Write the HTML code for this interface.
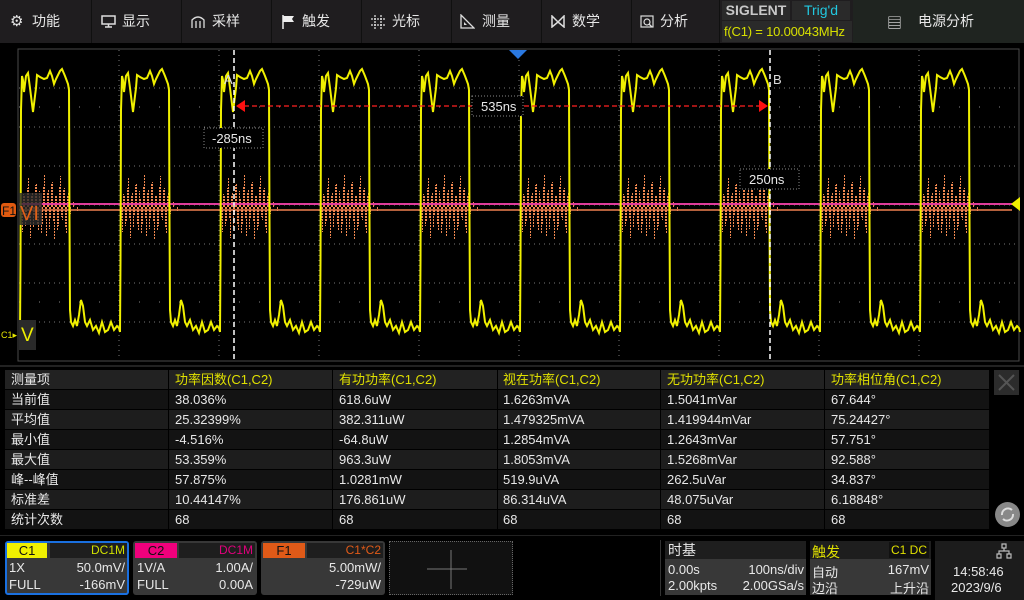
<!DOCTYPE html>
<html><head><meta charset="utf-8"><style>
*{margin:0;padding:0;box-sizing:border-box}
body{width:1024px;height:600px;background:#000;overflow:hidden;position:relative;font-family:"Liberation Sans","Noto Sans CJK SC",sans-serif;color:#e8e8e8;font-size:13px}
.abs{position:absolute}
.menu{left:0;top:0;width:1024px;height:43px;background:#1f1d1f}
.mb{position:absolute;top:0;height:43px;border-right:1px solid #101010;font-size:14px;line-height:43px;color:#e6e6e6}
.tbl{left:5px;top:370px;width:984px}
.row{position:absolute;left:0;width:984px;height:19px}
.cell{position:absolute;top:0;height:19px;line-height:19px;padding-left:6px;font-size:13px;white-space:nowrap}
.box{position:absolute;top:541px;height:54px;background:#383838;border-radius:3px}
</style></head><body>
<div class="abs menu">
 <div class="mb" style="left:0;width:92px"><span style="position:absolute;left:10px;font-size:15px">⚙</span><span style="position:absolute;left:32px">功能</span></div>
 <div class="mb" style="left:92px;width:90px"><svg style="position:absolute;left:9px;top:15px" width="15" height="13"><rect x="1" y="1" width="13" height="8" fill="none" stroke="#ddd" stroke-width="1.5"/><path d="M7.5 9v3M4 12h7" stroke="#ddd" stroke-width="1.5"/></svg><span style="position:absolute;left:30px">显示</span></div>
 <div class="mb" style="left:182px;width:90px"><svg style="position:absolute;left:9px;top:15px" width="14" height="13"><path d="M1 13V5Q7-1 13 5V13M5 13V6M9 13V6" fill="none" stroke="#ddd" stroke-width="1.3"/></svg><span style="position:absolute;left:30px">采样</span></div>
 <div class="mb" style="left:272px;width:90px"><svg style="position:absolute;left:9px;top:14px" width="14" height="15"><path d="M2 1v14" stroke="#eee" stroke-width="1.5"/><path d="M2 2h11l-2 3 2 3H2z" fill="#eee"/></svg><span style="position:absolute;left:30px">触发</span></div>
 <div class="mb" style="left:362px;width:90px"><svg style="position:absolute;left:9px;top:15px" width="14" height="14"><path d="M4 0v14M10 0v14M0 4h14M0 10h14" stroke="#ddd" stroke-dasharray="2 1" stroke-width="1.3"/></svg><span style="position:absolute;left:30px">光标</span></div>
 <div class="mb" style="left:452px;width:90px"><svg style="position:absolute;left:8px;top:14px" width="15" height="15"><path d="M1 1v13h13z" fill="none" stroke="#ddd" stroke-width="1.3"/><path d="M4 8v3h3z" fill="#ddd"/></svg><span style="position:absolute;left:30px">测量</span></div>
 <div class="mb" style="left:542px;width:90px"><svg style="position:absolute;left:9px;top:15px" width="15" height="13"><path d="M1 1l6 6 6-6v11l-6-5-6 5z" fill="none" stroke="#ddd" stroke-width="1.5"/></svg><span style="position:absolute;left:30px">数学</span></div>
 <div class="mb" style="left:632px;width:88px"><svg style="position:absolute;left:8px;top:14px" width="15" height="15"><rect x="1" y="2" width="12" height="11" fill="none" stroke="#ddd" stroke-width="1.2"/><circle cx="7" cy="8" r="3" fill="none" stroke="#ddd" stroke-width="1.2"/><path d="M9 10l3 3" stroke="#ddd" stroke-width="1.3"/></svg><span style="position:absolute;left:28px">分析</span></div>
 <div class="abs" style="left:722px;top:1px;width:68px;height:19px;background:#2a2a2a;color:#c8c8c8;font-weight:bold;font-size:14px;line-height:19px;text-align:center;white-space:nowrap">SIGLENT</div>
 <div class="abs" style="left:792px;top:1px;width:58px;height:19px;background:#2a2a2a;color:#22c8e0;font-size:14px;line-height:19px;text-align:center">Trig'd</div>
 <div class="abs" style="left:722px;top:21px;width:130px;height:21px;background:#2a2a2a;color:#d8e000;font-size:13px;line-height:21px;padding-left:2px;white-space:nowrap;letter-spacing:-0.2px">f(C1) = 10.00043MHz</div>
 <div class="abs" style="left:853px;top:0;width:171px;height:43px;background:#1f2420"><span style="position:absolute;left:34px;top:12px;font-size:15px">▤</span><span style="position:absolute;left:65px;top:0;line-height:43px;font-size:14px">电源分析</span></div>
</div>

<svg class="abs" style="left:0;top:43px" width="1024" height="325" viewBox="0 43 1024 325">
 <defs>
  <path id="wf" d="M0,332 L0.5,260 L1,110 L2,76 L3,80 L4,92 L5,84 L6,76 L8,73 L10,88 L12,104 L13,112 L14,104 L16,88 L17,75 L20,77 L24,79 L27,78 L30,71 L32,76 L34,84 L36,79 L40,71 L42,69 L45,76 L48,84 L49,90 L49.5,220 L50,310 L51,322 L53,326 L55,320 L57,326 L59,315 L61,300 L63,306 L65,322 L67,326 L70,320 L73,330 L76,326 L79,333 L82,322 L85,332 L88,330 L91,322 L94,330 L97,326 L99,328 L100,332" fill="none" stroke="#f0f000" stroke-width="2"/>
  <path id="ns" d="M0.5,207V186M1.5,207V220M2.5,207V232M3.5,207V194M4.5,207V196M5.5,207V226M6.5,207V222M7.5,207V188M8.5,207V178M9.5,207V218M10.5,207V238M11.5,207V196M12.5,207V192M13.5,207V228M14.5,207V216M15.5,207V185M16.5,207V184M17.5,207V224M18.5,207V230M19.5,207V191M20.5,207V199M21.5,207V234M22.5,207V224M23.5,207V187M24.5,207V174M25.5,207V219M26.5,207V236M27.5,207V193M28.5,207V190M29.5,207V229M30.5,207V218M31.5,207V183M32.5,207V182M33.5,207V221M34.5,207V240M35.5,207V196M36.5,207V195M37.5,207V231M38.5,207V226M39.5,207V186M40.5,207V176M41.5,207V217M42.5,207V220M43.5,207V190M44.5,207V188M45.5,207V227M46.5,207V234M47.5,207V195M48.5,207V192M49.5,207V220M50.5,207V214M53.5,207V202M57.5,207V211" stroke="#f08850" stroke-width="1" stroke-dasharray="2 1"/>
 </defs>
 <rect x="18" y="49" width="1001" height="312" fill="#000" stroke="#4a4a4a"/>
 <g stroke="#777" stroke-width="1" stroke-dasharray="1 4">
  <path d="M119 50V360M219 50V360M319 50V360M419 50V360M519 50V360M619 50V360M719 50V360M819 50V360M919 50V360"/>
  <path d="M19 88H1018M19 127H1018M19 166H1018M19 205H1018M19 244H1018M19 283H1018M19 322H1018"/>
 </g>
 <g stroke="#888" stroke-dasharray="1 19"><path d="M19 107H1018M19 302H1018"/></g>
 <g>
  <use href="#ns" x="20"/><use href="#ns" x="120"/><use href="#ns" x="220"/><use href="#ns" x="320"/><use href="#ns" x="420"/><use href="#ns" x="520"/><use href="#ns" x="620"/><use href="#ns" x="720"/><use href="#ns" x="820"/><use href="#ns" x="920"/>
 </g>
 <path d="M19 204H1012" stroke="#e03c9c" stroke-width="2"/>
 <path d="M19 210H1012" stroke="#f08050" stroke-width="1.5"/>
 <g>
  <use href="#wf" x="20" y="0"/><use href="#wf" x="120"/><use href="#wf" x="220"/><use href="#wf" x="320"/><use href="#wf" x="420"/><use href="#wf" x="520"/><use href="#wf" x="620"/><use href="#wf" x="720"/><use href="#wf" x="820"/><use href="#wf" x="920"/>
 </g>
 <path d="M234 50V360M770 50V360" stroke="#fff" stroke-width="1.5" stroke-dasharray="5 3"/>
 <path d="M244 106H760" stroke="#ff2020" stroke-width="1.2" stroke-dasharray="5 3"/>
 <path d="M236 106l9-6v12zM768 106l-9-6v12z" fill="#ff1010"/>
 <path d="M509 50h18l-9 9z" fill="#2a78e0"/>
 <path d="M1020 197v14l-9-7z" fill="#f0f000"/>
 <text x="224" y="84" fill="#ddd" font-size="13" font-family="Liberation Sans">A</text>
 <text x="773" y="84" fill="#ddd" font-size="13" font-family="Liberation Sans">B</text>
 <g font-family="Liberation Sans" font-size="13" fill="#e8e8e8">
  <rect x="472" y="96" width="51" height="20" fill="#000" stroke="#888" stroke-dasharray="1 2"/><text x="481" y="111">535ns</text>
  <rect x="204" y="128" width="59" height="20" fill="#000" stroke="#888" stroke-dasharray="1 2"/><text x="212" y="143">-285ns</text>
  <rect x="740" y="169" width="59" height="20" fill="#000" stroke="#888" stroke-dasharray="1 2"/><text x="749" y="184">250ns</text>
 </g>
 <rect x="19" y="193" width="23" height="32" fill="#2a2a2a" opacity="0.8"/>
 <rect x="1" y="203" width="15" height="14" rx="3" fill="#e05a10"/>
 <text x="2" y="215" fill="#111" font-size="12" font-family="Liberation Sans">F1</text>
 <text x="20" y="220" fill="#e06018" font-size="20" font-family="Liberation Sans">VI</text>
 <rect x="19" y="320" width="17" height="30" fill="#2a2a2a"/>
 <text x="1" y="338" fill="#e8e800" font-size="9" font-family="Liberation Sans">C1▸</text>
 <text x="21" y="341" fill="#f0f000" font-size="19" font-family="Liberation Sans">V</text>
</svg>

<div class="abs" style="left:0;top:365px;width:1024px;height:2px;background:#222"></div>
<div class="abs tbl">
 <div class="row" style="top:0;background:#222"></div>
 <div class="row" style="top:20px;background:#131313"></div>
 <div class="row" style="top:40px;background:#1d1d1d"></div>
 <div class="row" style="top:60px;background:#131313"></div>
 <div class="row" style="top:80px;background:#1d1d1d"></div>
 <div class="row" style="top:100px;background:#131313"></div>
 <div class="row" style="top:120px;background:#1d1d1d"></div>
 <div class="row" style="top:140px;background:#131313"></div>
 <div style="position:absolute;left:163px;top:0;width:1px;height:160px;background:#000"></div>
 <div style="position:absolute;left:327px;top:0;width:1px;height:160px;background:#000"></div>
 <div style="position:absolute;left:492px;top:0;width:1px;height:160px;background:#000"></div>
 <div style="position:absolute;left:655px;top:0;width:1px;height:160px;background:#000"></div>
 <div style="position:absolute;left:819px;top:0;width:1px;height:160px;background:#000"></div>
 <div style="position:absolute;left:0;top:0;width:984px">
  <div class="cell" style="left:0;top:0">测量项</div>
  <div class="cell" style="left:164px;color:#e0e000">功率因数(C1,C2)</div>
  <div class="cell" style="left:328px;color:#e0e000">有功功率(C1,C2)</div>
  <div class="cell" style="left:492px;color:#e0e000">视在功率(C1,C2)</div>
  <div class="cell" style="left:656px;color:#e0e000">无功功率(C1,C2)</div>
  <div class="cell" style="left:820px;color:#e0e000">功率相位角(C1,C2)</div>
 </div>
 <div style="position:absolute;left:0;top:20px;width:984px;height:19px"><div class="cell" style="left:0">当前值</div><div class="cell" style="left:164px">38.036%</div><div class="cell" style="left:328px">618.6uW</div><div class="cell" style="left:492px">1.6263mVA</div><div class="cell" style="left:656px">1.5041mVar</div><div class="cell" style="left:820px">67.644°</div></div>
 <div style="position:absolute;left:0;top:40px;width:984px;height:19px"><div class="cell" style="left:0">平均值</div><div class="cell" style="left:164px">25.32399%</div><div class="cell" style="left:328px">382.311uW</div><div class="cell" style="left:492px">1.479325mVA</div><div class="cell" style="left:656px">1.419944mVar</div><div class="cell" style="left:820px">75.24427°</div></div>
 <div style="position:absolute;left:0;top:60px;width:984px;height:19px"><div class="cell" style="left:0">最小值</div><div class="cell" style="left:164px">-4.516%</div><div class="cell" style="left:328px">-64.8uW</div><div class="cell" style="left:492px">1.2854mVA</div><div class="cell" style="left:656px">1.2643mVar</div><div class="cell" style="left:820px">57.751°</div></div>
 <div style="position:absolute;left:0;top:80px;width:984px;height:19px"><div class="cell" style="left:0">最大值</div><div class="cell" style="left:164px">53.359%</div><div class="cell" style="left:328px">963.3uW</div><div class="cell" style="left:492px">1.8053mVA</div><div class="cell" style="left:656px">1.5268mVar</div><div class="cell" style="left:820px">92.588°</div></div>
 <div style="position:absolute;left:0;top:100px;width:984px;height:19px"><div class="cell" style="left:0">峰--峰值</div><div class="cell" style="left:164px">57.875%</div><div class="cell" style="left:328px">1.0281mW</div><div class="cell" style="left:492px">519.9uVA</div><div class="cell" style="left:656px">262.5uVar</div><div class="cell" style="left:820px">34.837°</div></div>
 <div style="position:absolute;left:0;top:120px;width:984px;height:19px"><div class="cell" style="left:0">标准差</div><div class="cell" style="left:164px">10.44147%</div><div class="cell" style="left:328px">176.861uW</div><div class="cell" style="left:492px">86.314uVA</div><div class="cell" style="left:656px">48.075uVar</div><div class="cell" style="left:820px">6.18848°</div></div>
 <div style="position:absolute;left:0;top:140px;width:984px;height:19px"><div class="cell" style="left:0">统计次数</div><div class="cell" style="left:164px">68</div><div class="cell" style="left:328px">68</div><div class="cell" style="left:492px">68</div><div class="cell" style="left:656px">68</div><div class="cell" style="left:820px">68</div></div>
</div>
<div class="abs" style="left:994px;top:370px;width:25px;height:25px;background:#2c2c2c"><svg width="25" height="25"><path d="M5 5L20 20M20 5L5 20" stroke="#555" stroke-width="2"/></svg></div>
<div class="abs" style="left:995px;top:502px;width:25px;height:25px;border-radius:50%;background:#888"><svg width="25" height="25"><path d="M7 13a6 6 0 0 1 10-5M18 12a6 6 0 0 1-10 5" fill="none" stroke="#ddd" stroke-width="2"/></svg></div>
<div class="abs" style="left:0;top:535px;width:1024px;height:1px;background:#222"></div>

<div class="box" style="left:5px;width:124px;border:2px solid #1a70e0;background:#383838">
 <div style="position:absolute;left:0;top:0;width:40px;height:15px;background:#f0f000;color:#111;font-size:13px;text-align:center;line-height:15px">C1</div>
 <div style="position:absolute;left:43px;top:0;width:77px;height:15px;background:#1e1e1e;color:#d0e000;font-size:12px;text-align:right;line-height:15px;padding-right:2px">DC1M</div>
 <div style="position:absolute;left:2px;top:17px;font-size:13px">1X</div><div style="position:absolute;right:2px;top:17px">50.0mV/</div>
 <div style="position:absolute;left:2px;top:34px">FULL</div><div style="position:absolute;right:2px;top:34px">-166mV</div>
</div>
<div class="box" style="left:133px;width:124px">
 <div style="position:absolute;left:2px;top:2px;width:42px;height:15px;background:#f0007c;color:#111;text-align:center;line-height:15px">C2</div>
 <div style="position:absolute;left:46px;top:2px;width:76px;height:15px;background:#1e1e1e;color:#e0007c;font-size:12px;text-align:right;line-height:15px;padding-right:2px">DC1M</div>
 <div style="position:absolute;left:4px;top:19px">1V/A</div><div style="position:absolute;right:4px;top:19px">1.00A/</div>
 <div style="position:absolute;left:4px;top:36px">FULL</div><div style="position:absolute;right:4px;top:36px">0.00A</div>
</div>
<div class="box" style="left:261px;width:124px">
 <div style="position:absolute;left:2px;top:2px;width:42px;height:15px;background:#e05a18;color:#111;text-align:center;line-height:15px">F1</div>
 <div style="position:absolute;left:46px;top:2px;width:76px;height:15px;background:#1e1e1e;color:#e05a18;font-size:12px;text-align:right;line-height:15px;padding-right:2px">C1*C2</div>
 <div style="position:absolute;right:4px;top:19px">5.00mW/</div>
 <div style="position:absolute;right:4px;top:36px">-729uW</div>
</div>
<div class="abs" style="left:389px;top:541px;width:124px;height:54px;border:1px dotted #666;background:#111"><svg width="122" height="52"><path d="M37 27H77M61 8V47" stroke="#777"/></svg></div>
<div class="abs" style="left:660px;top:540px;width:1px;height:56px;background:#333"></div>
<div class="abs" style="left:665px;top:541px;width:141px;height:54px;background:#262626">
 <div style="position:absolute;left:0;top:0;width:141px;height:18px;background:#1e1e1e;font-size:14px;padding-left:3px;line-height:18px">时基</div>
 <div style="position:absolute;left:0;top:18px;width:141px;height:36px;background:#383838"></div>
 <div style="position:absolute;left:3px;top:21px">0.00s</div><div style="position:absolute;right:2px;top:21px">100ns/div</div>
 <div style="position:absolute;left:3px;top:37px">2.00kpts</div><div style="position:absolute;right:2px;top:37px">2.00GSa/s</div>
</div>
<div class="abs" style="left:810px;top:541px;width:121px;height:54px;background:#383838">
 <div style="position:absolute;left:0;top:0;width:121px;height:18px;background:#1e1e1e"></div>
 <div style="position:absolute;left:2px;top:1px;font-size:14px;color:#e0e000">触发</div>
 <div style="position:absolute;right:2px;top:1px;background:#111;color:#e0e000;font-size:12px;padding:1px 2px">C1 DC</div>
 <div style="position:absolute;left:2px;top:21px">自动</div><div style="position:absolute;right:2px;top:21px">167mV</div>
 <div style="position:absolute;left:2px;top:37px">边沿</div><div style="position:absolute;right:2px;top:37px">上升沿</div>
</div>
<div class="abs" style="left:935px;top:541px;width:89px;height:59px;background:#1c1c1c">
 <svg style="position:absolute;left:61px;top:2px" width="16" height="16"><path d="M6 1h4v4H6zM1 11h4v4H1zM11 11h4v4h-4zM8 5v3M3 11V8h10v3" fill="none" stroke="#bbb" stroke-width="1.2"/></svg>
 <div style="position:absolute;left:18px;top:23px">14:58:46</div>
 <div style="position:absolute;left:16px;top:39px">2023/9/6</div>
</div>
</body></html>
